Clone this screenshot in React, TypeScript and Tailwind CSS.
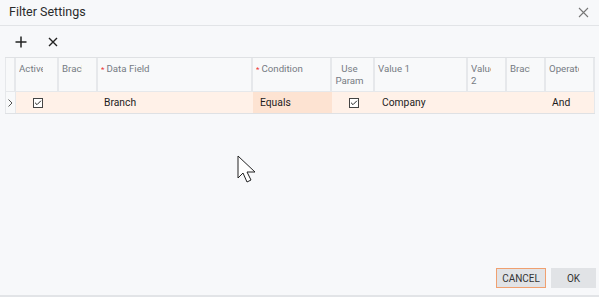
import { Check } from "lucide-react"

const cols = [
  { key: "sel", label: "" },
  { key: "active", label: "Active" },
  { key: "brack1", label: "Brackets" },
  { key: "field", label: "Data Field", req: true },
  { key: "cond", label: "Condition", req: true },
  { key: "param", label: "Use Param", center: true },
  { key: "v1", label: "Value 1" },
  { key: "v2", label: "Value 2" },
  { key: "brack2", label: "Brackets" },
  { key: "op", label: "Operator" },
]

function CheckBox() {
  return (
    <span className="flex h-[10px] w-[10px] items-center justify-center border border-[#444] bg-white">
      <Check className="h-[8px] w-[8px] text-[#222]" strokeWidth={3} />
    </span>
  )
}

export default function App() {
  return (
    <div className="relative flex h-[297px] w-[599px] flex-col bg-[#f7f8fa] text-[#1c1c1c]" style={{ fontFamily: "Roboto, 'Liberation Sans', Arial, sans-serif" }}>
      {/* title bar */}
      <div className="flex h-[26px] items-center justify-between border-b border-[#e2e4e7] pl-[9px] pr-[10px]">
        <span className="text-[12.5px] text-[#2a2a2a]">Filter Settings</span>
        <svg width="11" height="11" viewBox="0 0 11 11" className="text-[#777]">
          <path d="M1 1L10 10M10 1L1 10" stroke="currentColor" strokeWidth="1.1" fill="none" />
        </svg>
      </div>

      {/* toolbar */}
      <div className="flex h-[31px] items-center gap-[21px] pl-[15px]">
        <svg width="12" height="12" viewBox="0 0 12 12">
          <path d="M6 0.5V11.5M0.5 6H11.5" stroke="#222" strokeWidth="1.5" fill="none" />
        </svg>
        <svg width="10" height="10" viewBox="0 0 10 10">
          <path d="M1 1L9 9M9 1L1 9" stroke="#222" strokeWidth="1.4" fill="none" />
        </svg>
      </div>

      {/* grid */}
      <div className="mx-[5px] w-[590px] border-b border-[#dfe1e4]">
        <div className="grid h-[34px] grid-cols-[11px_43px_39px_155px_79px_43px_93px_39px_39px_49px] border-t border-[#dfe1e4] bg-[#f8f9fa]">
          {cols.map((c, i) => (
            <div
              key={c.key}
              className={`overflow-hidden border-r-2 border-[#e6e8eb] pt-[5px] text-[9.7px] leading-[12px] text-[#767b83] ${i === 0 ? "border-l" : ""} ${i === cols.length - 1 ? "border-r" : ""} ${c.center ? "pl-[2px] pr-[8px] text-center" : "pl-[3px]"}`}
            >
              <div className={`overflow-hidden ${c.center ? "" : "mr-[14px]"}`}>
                {c.req && <span className="mr-[2px] text-[8px] text-[#e33]">*</span>}
                <span className={c.key === "v2" || c.center ? "" : "whitespace-nowrap"}>{c.label}</span>
              </div>
            </div>
          ))}
        </div>
        <div className="grid h-[22px] grid-cols-[11px_43px_39px_155px_79px_43px_93px_39px_39px_49px] border-t border-[#e6e8eb] bg-[#fff1e8] text-[10.3px]">
          <div className="flex items-center border-l border-r border-[#e6e8eb] bg-[#f8f9fa] pl-[2px]">
            <svg width="5" height="8" viewBox="0 0 5 8">
              <path d="M0.5 0.5L4 4L0.5 7.5" stroke="#555" strokeWidth="1" fill="none" />
            </svg>
          </div>
          <div className="flex items-center justify-center">
            <CheckBox />
          </div>
          <div />
          <div className="flex items-center pl-[6px]">Branch</div>
          <div className="flex items-center bg-[#fde3d2] pl-[7px]">Equals</div>
          <div className="flex items-center justify-center">
            <CheckBox />
          </div>
          <div className="flex items-center pl-[7px]">Company</div>
          <div />
          <div />
          <div className="flex items-center border-r border-[#e6e8eb] pl-[6px]">And</div>
        </div>
      </div>

      <div className="flex-1" />

      {/* footer */}
      <div className="flex h-[29px] items-start justify-end gap-[5px] border-b-2 border-[#e2e4e7] pr-[3px]">
        <button className="h-[20px] w-[50px] border border-[#f0a070] bg-[#e1e3e6] text-[10px] text-[#333]">CANCEL</button>
        <button className="h-[20px] w-[45px] bg-[#e1e3e6] text-[10px] text-[#333]">OK</button>
      </div>

      {/* mouse pointer over the dialog */}
      <svg className="absolute left-[237px] top-[155px]" width="22" height="30" viewBox="0 0 22 30">
        <path d="M1 1V23L6 18L10 27L14 25L10 17H18Z" fill="#fff" stroke="#222" strokeWidth="1" strokeLinejoin="miter" />
      </svg>
    </div>
  )
}
